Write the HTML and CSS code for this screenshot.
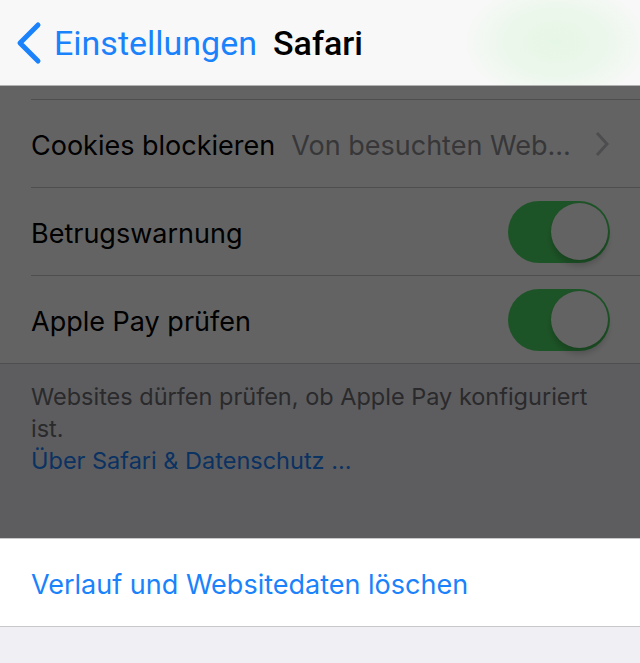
FILE: index.html
```html
<html>
  <head>
    <meta charset="utf-8">
    <link rel="stylesheet" href="styles.css">
  </head>
  <body>
    <header class="nav">
      <a class="back">
        <svg class="back-icon" viewBox="0 0 28 44">
          <path d="M24 4 L6 22 L24 40"/>
        </svg>
        <span>Einstellungen</span>
      </a>
      <h1>Safari</h1>
    </header>

    <div class="dimmed">
      <section class="group">
        <div class="cell cell-partial"></div>
        <div class="cell">
          <span class="label">Cookies blockieren</span>
          <span class="value">Von besuchten Web...</span>
          <svg class="chevron" viewBox="0 0 16 28">
            <path d="M3 3 L13 14 L3 25"/>
          </svg>
        </div>
        <div class="cell">
          <span class="label">Betrugswarnung</span>
          <span class="switch on"><span class="knob"></span></span>
        </div>
        <div class="cell">
          <span class="label">Apple Pay prüfen</span>
          <span class="switch on"><span class="knob"></span></span>
        </div>
      </section>
      <footer class="group-footer">
        <p>Websites dürfen prüfen, ob Apple Pay konfiguriert ist.</p>
        <a class="link">Über Safari &amp; Datenschutz ...</a>
      </footer>
    </div>

    <section class="group plain">
      <div class="cell">
        <span class="action">Verlauf und Websitedaten löschen</span>
      </div>
    </section>
  </body>
</html>
```

FILE: styles.css
```css
:root {
  --tint: #1a82fb;
  --separator: #c8c7cc;
  --group-bg: #efeff4;
  --cell-bg: #ffffff;
  --nav-bg: #f8f8f8;
  --switch-on: #4cd964;
}

html {
  background-color: var(--group-bg);
}

body {
  margin: 0;
  font-family: Inter, Roboto, sans-serif;
  color: #000;
  background-color: var(--group-bg);
  min-height: 663px;
}

.nav {
  height: 85px;
  border-bottom: 1px solid #b2b2b2;
  background-color: var(--nav-bg);
  background-image: radial-gradient(ellipse 95px 62px at 556px 42px, #e6f6e6 0%, #ebf7eb 50%, rgba(248, 248, 248, 0) 100%);
  display: flex;
  align-items: center;
  padding-left: 14px;
  gap: 16px;
  font-family: Roboto, sans-serif;
}

.back {
  display: flex;
  align-items: center;
  gap: 12px;
  color: var(--tint);
  font-size: 34px;
}

.back-icon {
  width: 28px;
  height: 44px;
  fill: none;
  stroke: var(--tint);
  stroke-width: 5px;
  stroke-linecap: round;
  stroke-linejoin: round;
}

.nav h1 {
  margin: 0;
  font-size: 34px;
  font-weight: 500;
}

.dimmed {
  position: relative;
  height: 452px;
}

.dimmed:after {
  content: '';
  position: absolute;
  top: 0;
  left: 0;
  right: 0;
  bottom: 0;
  background: rgba(0, 0, 0, 0.61);
}

.group {
  background-color: var(--cell-bg);
  border-bottom: 1px solid var(--separator);
}

.plain {
  border-top: 1px solid var(--separator);
}

.cell {
  height: 87px;
  margin-left: 31px;
  padding-right: 30px;
  display: flex;
  align-items: center;
  font-size: 27px;
  border-bottom: 1px solid var(--separator);
}

.cell:last-child {
  border-bottom: none;
}

.cell-partial {
  height: 13px;
}

.label, .value, .action {
  margin-top: 4px;
}

.label {
  flex: none;
}

.value {
  flex: 1;
  margin-left: 16px;
  color: #8e8e93;
  white-space: nowrap;
}

.chevron {
  width: 16px;
  height: 28px;
  fill: none;
  stroke: #c7c7cc;
  stroke-width: 3px;
}

.switch {
  margin-left: auto;
  width: 102px;
  height: 62px;
  border-radius: 31px;
  background: var(--switch-on);
  display: flex;
  align-items: center;
  justify-content: flex-end;
  padding: 2px;
  box-sizing: border-box;
}

.knob {
  width: 57px;
  height: 57px;
  border-radius: 50%;
  background: #fff;
  box-shadow: 0 6px 6px rgba(0, 0, 0, 0.18), 0 0 1px rgba(0, 0, 0, 0.2);
}

.group-footer {
  height: 175px;
  box-sizing: border-box;
  padding: 17px 31px 0;
  color: #6d6d72;
  font-size: 23.5px;
  line-height: 32px;
}

.group-footer p {
  margin: 0;
}

.link {
  color: var(--tint);
}

.action {
  color: var(--tint);
}
```
